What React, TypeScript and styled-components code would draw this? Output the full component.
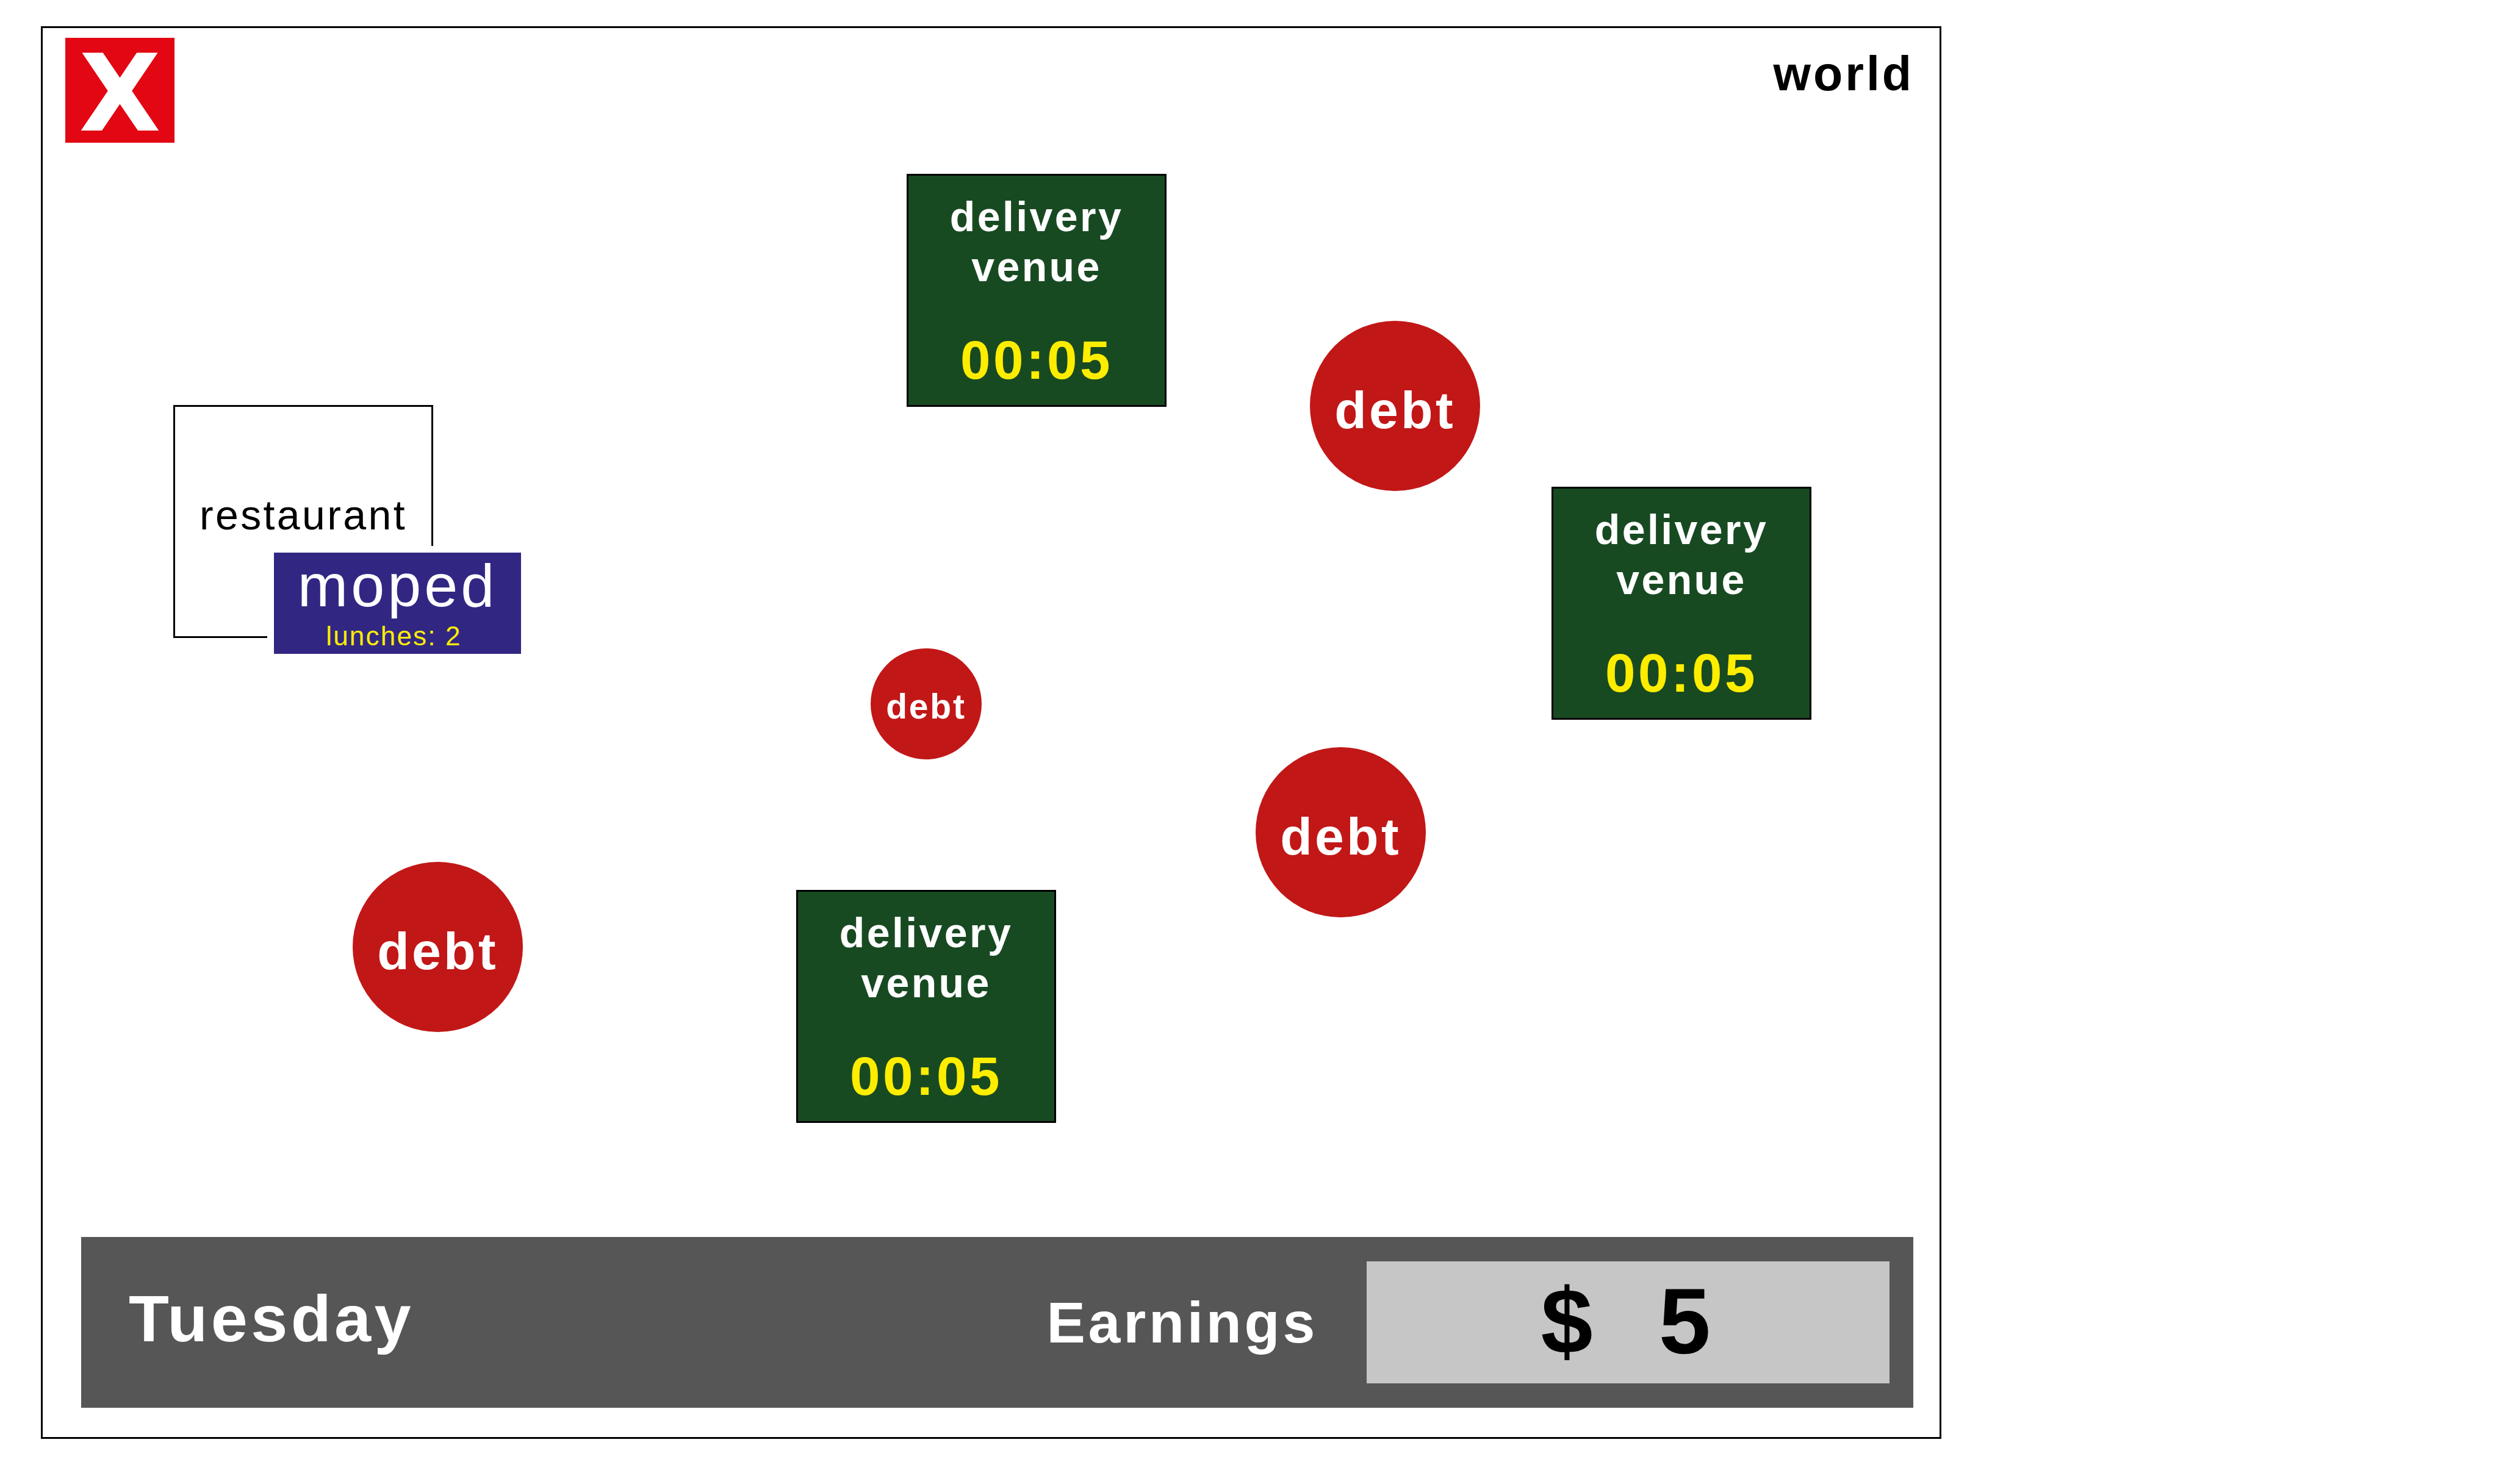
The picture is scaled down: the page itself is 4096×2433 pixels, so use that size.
import React from "react";
import styled, { createGlobalStyle } from "styled-components";

const WORLD_WIDTH = 3109;
const WORLD_HEIGHT = 1794;

const GlobalStyle = createGlobalStyle`
  *, *::before, *::after { box-sizing: border-box; letter-spacing: 0.05em; }
  body {
    margin: 0;
    background: #ffffff;
    color: #000000;
    font-family: "Liberation Sans", Arial, Helvetica, sans-serif;
  }
`;

const Page = styled.div`
  display: grid;
  grid-template-columns: 3115fr 914fr;
  min-height: 100vh;
  padding: 43px 0 74px 67px;
`;

const GameFrame = styled.main`
  display: flex;
  flex-direction: column;
  border: 3px solid #000000;
`;

const Header = styled.header`
  display: flex;
  justify-content: space-between;
  align-items: flex-start;
  padding: 16px 42px 0 37px;
`;

const CloseButton = styled.button`
  display: flex;
  align-items: center;
  justify-content: center;
  width: 179px;
  height: 172px;
  padding: 12px 0 0;
  border: 0;
  background: #e30613;
  color: #ffffff;
  font: bold 174px/172px "DejaVu Sans", Verdana, sans-serif;
  letter-spacing: 0;
  cursor: pointer;
`;

const Title = styled.h1`
  margin: 0;
  padding-top: 15px;
  font-size: 79px;
  line-height: 88px;
`;

const World = styled.section`
  position: relative;
  flex: 1;
  min-height: 1200px;
`;

const Place = styled.div<{ $x: number; $y: number }>`
  position: absolute;
  left: ${(p) => (p.$x / WORLD_WIDTH) * 100}%;
  top: ${(p) => (p.$y / WORLD_HEIGHT) * 100}%;
`;

const RestaurantCard = styled(Place)`
  display: flex;
  align-items: center;
  justify-content: center;
  width: 426px;
  height: 382px;
  padding-bottom: 22px;
  border: 3px solid #000000;
  font-size: 68px;
  line-height: 82px;
`;

const MopedCard = styled(Place)`
  display: flex;
  flex-direction: column;
  align-items: center;
  width: 405px;
  height: 166px;
  background: #312783;
  box-shadow: 0 0 0 11px #ffffff;
  color: #ffffff;
`;

const MopedName = styled.span`
  font-size: 99px;
  line-height: 108px;
`;

const LunchCount = styled.span`
  padding-right: 12px;
  color: #ffed00;
  font-size: 44px;
  line-height: 58px;
`;

const VenueCard = styled(Place)`
  display: flex;
  flex-direction: column;
  align-items: center;
  justify-content: space-between;
  width: 426px;
  height: 382px;
  padding: 26px 0 24px;
  border: 3px solid #000000;
  background: #184a22;
  color: #ffffff;
  font-weight: bold;
  text-align: center;
`;

const VenueName = styled.span`
  width: min-content;
  font-size: 68px;
  line-height: 82px;
`;

const Countdown = styled.time`
  color: #ffed00;
  font-size: 89px;
  line-height: 100px;
`;

const DebtBall = styled(Place)<{ $small?: boolean }>`
  display: flex;
  align-items: center;
  justify-content: center;
  width: ${(p) => (p.$small ? 182 : 279)}px;
  height: ${(p) => (p.$small ? 182 : 279)}px;
  padding-top: ${(p) => (p.$small ? 8 : 12)}px;
  border-radius: 50%;
  background: #c21717;
  color: #ffffff;
  font-size: ${(p) => (p.$small ? 57 : 86)}px;
  line-height: 1;
  font-weight: bold;
`;

const StatusBar = styled.footer`
  display: flex;
  align-items: center;
  height: 280px;
  margin: 0 43px 48px 63px;
  padding: 0 39px 0 78px;
  background: #565656;
  color: #ffffff;
  font-weight: bold;
`;

const Day = styled.span`
  flex: 1;
  padding-bottom: 12px;
  font-size: 108px;
  line-height: 124px;
`;

const EarningsLabel = styled.label`
  margin-right: 80px;
  font-size: 95px;
  line-height: 108px;
`;

const EarningsValue = styled.output`
  width: 857px;
  height: 200px;
  background: #c6c6c6;
  color: #000000;
  font-size: 153px;
  line-height: 196px;
  text-align: center;
  white-space: pre;
`;

const venues = [
  { x: 1416, y: 51, time: "00:05" },
  { x: 2473, y: 564, time: "00:05" },
  { x: 1235, y: 1225, time: "00:05" },
];

const debts = [
  { x: 2077, y: 292, small: false },
  { x: 1357, y: 829, small: true },
  { x: 1988, y: 991, small: false },
  { x: 508, y: 1179, small: false },
];

export default function App() {
  return (
    <>
      <GlobalStyle />
      <Page>
        <GameFrame>
          <Header>
            <CloseButton type="button">X</CloseButton>
            <Title>world</Title>
          </Header>
          <World>
            <RestaurantCard $x={214} $y={430}>restaurant</RestaurantCard>
            <MopedCard $x={379} $y={672}>
              <MopedName>moped</MopedName>
              <LunchCount>lunches: 2</LunchCount>
            </MopedCard>
            {venues.map((v) => (
              <VenueCard key={v.x} $x={v.x} $y={v.y}>
                <VenueName>delivery venue</VenueName>
                <Countdown>{v.time}</Countdown>
              </VenueCard>
            ))}
            {debts.map((d) => (
              <DebtBall key={d.x} $x={d.x} $y={d.y} $small={d.small}>debt</DebtBall>
            ))}
          </World>
          <StatusBar>
            <Day>Tuesday</Day>
            <EarningsLabel htmlFor="earnings">Earnings</EarningsLabel>
            <EarningsValue id="earnings">{"$  5"}</EarningsValue>
          </StatusBar>
        </GameFrame>
      </Page>
    </>
  );
}
